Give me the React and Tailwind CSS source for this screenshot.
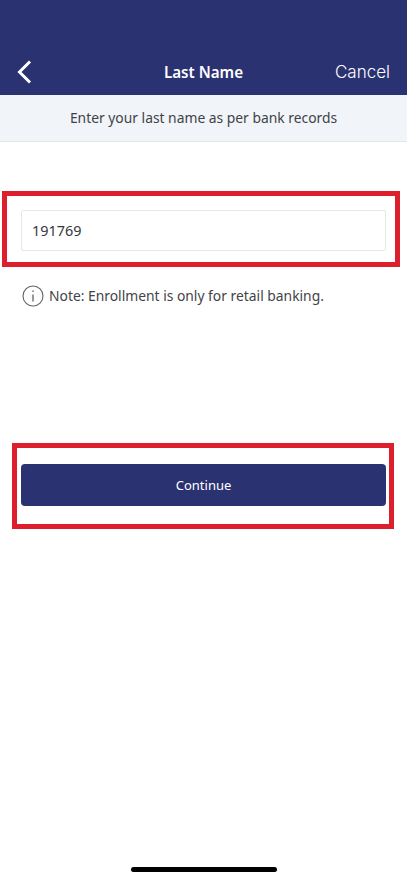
import React from 'react';

const App = () => {
  return (
    <div className="w-[407px] h-[880px] bg-white flex flex-col overflow-hidden font-['Noto_Sans',sans-serif]">
      {/* Header */}
      <div className="h-[95px] shrink-0 bg-[#2b3272] flex items-end justify-between pb-[9px] pl-[16px] pr-[17px] text-white">
        <svg width="16" height="26" viewBox="0 0 16 26" fill="none" stroke="white" strokeWidth="3" className="mb-[1px]">
          <path d="M14 2.5L3.5 13L14 23.5" />
        </svg>
        <p className="text-[15.2px] leading-[28px] font-semibold ml-[40px]">Last Name</p>
        <p className="text-[17px] leading-[28px] font-['Inter',sans-serif] font-light">Cancel</p>
      </div>

      {/* Subheader */}
      <div className="h-[47px] shrink-0 bg-[#f1f4f8] border-b border-[#e4e5e7] flex items-center justify-center">
        <p className="text-[13.85px] text-[#3f4347]">Enter your last name as per bank records</p>
      </div>

      {/* Input */}
      <div className="mt-[49px] ml-[2px] w-[398px] h-[76px] border-[5px] border-[#dd1f2d] pl-[14px] pt-[14px]">
        <div className="w-[365px] h-[41px] border border-[#e6e7e9] rounded-[2px] flex items-center pl-[10px] text-[14.4px] text-[#36393d]">
          191769
        </div>
      </div>

      {/* Note */}
      <div className="mt-[18px] ml-[22px] flex items-center gap-[5px] h-[22px]">
        <svg width="22" height="22" viewBox="0 0 22 22" fill="none" stroke="#5f6266" strokeWidth="1.1">
          <circle cx="11" cy="11" r="10" />
          <path d="M11 9.5V16.5" strokeWidth="1.3" />
          <path d="M11 5.5V7" strokeWidth="1.3" />
        </svg>
        <p className="text-[13.85px] text-[#3f4347]">Note: Enrollment is only for retail banking.</p>
      </div>

      {/* Button */}
      <div className="mt-[136px] ml-[12px] w-[382px] h-[86px] border-[5px] border-[#dd1f2d] pl-[4px] pt-[16px]">
        <button className="w-[365px] h-[42px] bg-[#2b3272] rounded-[4px] text-white text-[13px] pt-[2px] flex items-center justify-center">
          Continue
        </button>
      </div>

      {/* Home indicator */}
      <div className="mt-auto mb-[8px] mx-auto w-[146px] h-[5px] rounded-full bg-black" />
    </div>
  );
};

export default App;
